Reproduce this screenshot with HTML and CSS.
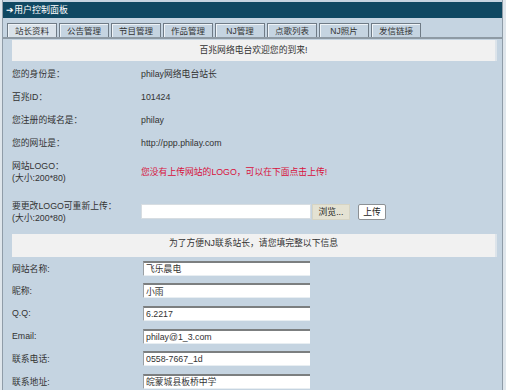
FILE: index.html
```html
<!DOCTYPE html>
<html lang="zh-CN">
<head>
    <meta charset="UTF-8">
    <title>用户控制面板</title>
    <link rel="stylesheet" href="styles.css">
</head>
<body>
<div class="panel">
    <div class="panel-head">➔用户控制面板</div>

    <div class="tabs">
        <span class="tab active">站长资料</span>
        <span class="tab">公告管理</span>
        <span class="tab">节目管理</span>
        <span class="tab">作品管理</span>
        <span class="tab">NJ管理</span>
        <span class="tab">点歌列表</span>
        <span class="tab">NJ照片</span>
        <span class="tab">发信链接</span>
    </div>

    <div class="tab-body">
        <div class="notice">百兆网络电台欢迎您的到来!</div>

        <div class="info">
            <div class="row"><span>您的身份是：</span><span>philay网络电台站长</span></div>
            <div class="row"><span>百兆ID：</span><span>101424</span></div>
            <div class="row"><span>您注册的域名是：</span><span>philay</span></div>
            <div class="row"><span>您的网址是：</span><span>http://ppp.philay.com</span></div>
            <div class="row logo-row">
                <span>网站LOGO：<br>(大小:200*80)</span>
                <span class="warn">您没有上传网站的LOGO，可以在下面点击上传!</span>
            </div>
            <div class="row upload-row">
                <span>要更改LOGO可重新上传：<br>(大小:200*80)</span>
                <span class="upload">
                    <span class="file-box"></span>
                    <button class="browse-btn">浏览...</button>
                    <button class="send-btn">上传</button>
                </span>
            </div>
        </div>

        <div class="notice notice-2">为了方便NJ联系站长，请您填完整以下信息</div>

        <div class="form">
            <div class="frow"><span>网站名称:</span><input class="text-in" value="飞乐晨电"></div>
            <div class="frow"><span>昵称:</span><input class="text-in" value="小雨"></div>
            <div class="frow"><span>Q.Q:</span><input class="text-in" value="6.2217"></div>
            <div class="frow"><span>Email:</span><input class="text-in" value="philay@1_3.com"></div>
            <div class="frow"><span>联系电话:</span><input class="text-in" value="0558-7667_1d"></div>
            <div class="frow"><span>联系地址:</span><input class="text-in" value="皖蒙城县板桥中学"></div>
        </div>
    </div>
</div>
</body>
</html>
```

FILE: styles.css
```css
body {
    margin: 0;
    background: #dfe6ec;
    font-family: "Liberation Sans", "Noto Sans CJK SC", sans-serif;
    font-size: 8.8px;
    color: #333;
}

.panel {
    margin: 0 3px 0 2px;
    padding-top: 2px;
    height: 388px;
    overflow: hidden;
    background: #c5d4e1;
    border-left: 1px solid #8f9ca8;
    border-right: 1px solid #8f9ca8;
}

.panel-head {
    height: 16px;
    line-height: 16px;
    padding-left: 3px;
    background: #0f4862;
    color: #fff;
    font-size: 9px;
}

/* tab bar */
.tabs {
    display: flex;
    gap: 2px;
    padding: 5px 0 0 4px;
    border-bottom: 2px solid #8e9aa4;
}
.tab {
    width: 48px;
    height: 13px;
    line-height: 14px;
    text-align: center;
    border: 1px solid #6f7b86;
    border-bottom: none;
    box-shadow: inset 1px 1px 0 #eef3f7;
    font-size: 8.5px;
    color: #333;
}
.tab.active {
    background: #d9e2ea;
}

.tab-body {
    padding: 1px 5px 0 9px;
}

.notice {
    height: 21px;
    line-height: 21px;
    text-align: center;
    background: #f1f1f1;
    border-right: 2px solid #dde4ea;
}

/* profile info */
.info {
    padding-top: 1px;
}
.row {
    display: grid;
    grid-template-columns: 129px 1fr;
    align-items: center;
    height: 23px;
}
.logo-row {
    height: 36px;
    line-height: 12px;
}
.upload-row {
    height: 43px;
    line-height: 12px;
}
.warn {
    color: #d8103c;
}
.upload {
    display: flex;
    align-items: center;
}
.file-box {
    width: 168px;
    height: 13px;
    background: #fff;
    border: 1px solid #d7dde2;
}
.browse-btn {
    width: 38px;
    height: 16px;
    padding: 0;
    margin-left: 1px;
    background: #e4e2d3;
    border: 1px solid #d6d4c4;
    font: inherit;
    color: #222;
}
.send-btn {
    width: 28px;
    height: 16px;
    padding: 0;
    margin-left: 8px;
    background: #fff;
    border: 1px solid #8c9094;
    border-radius: 2px;
    font: inherit;
    color: #222;
}

.notice-2 {
    height: 23px;
    line-height: 19px;
    margin-top: 1px;
}

/* contact form */
.frow {
    display: grid;
    grid-template-columns: 131px 167px;
    align-items: center;
    height: 22.6px;
}
.text-in {
    box-sizing: border-box;
    width: 167px;
    height: 15px;
    padding: 0 0 0 2px;
    background: #fff;
    border: none;
    border-top: 2px solid #7c7f80;
    border-left: 1px solid #9aa0a4;
    border-bottom: 1px solid #e8eef2;
    font: inherit;
    color: #333;
}
```
